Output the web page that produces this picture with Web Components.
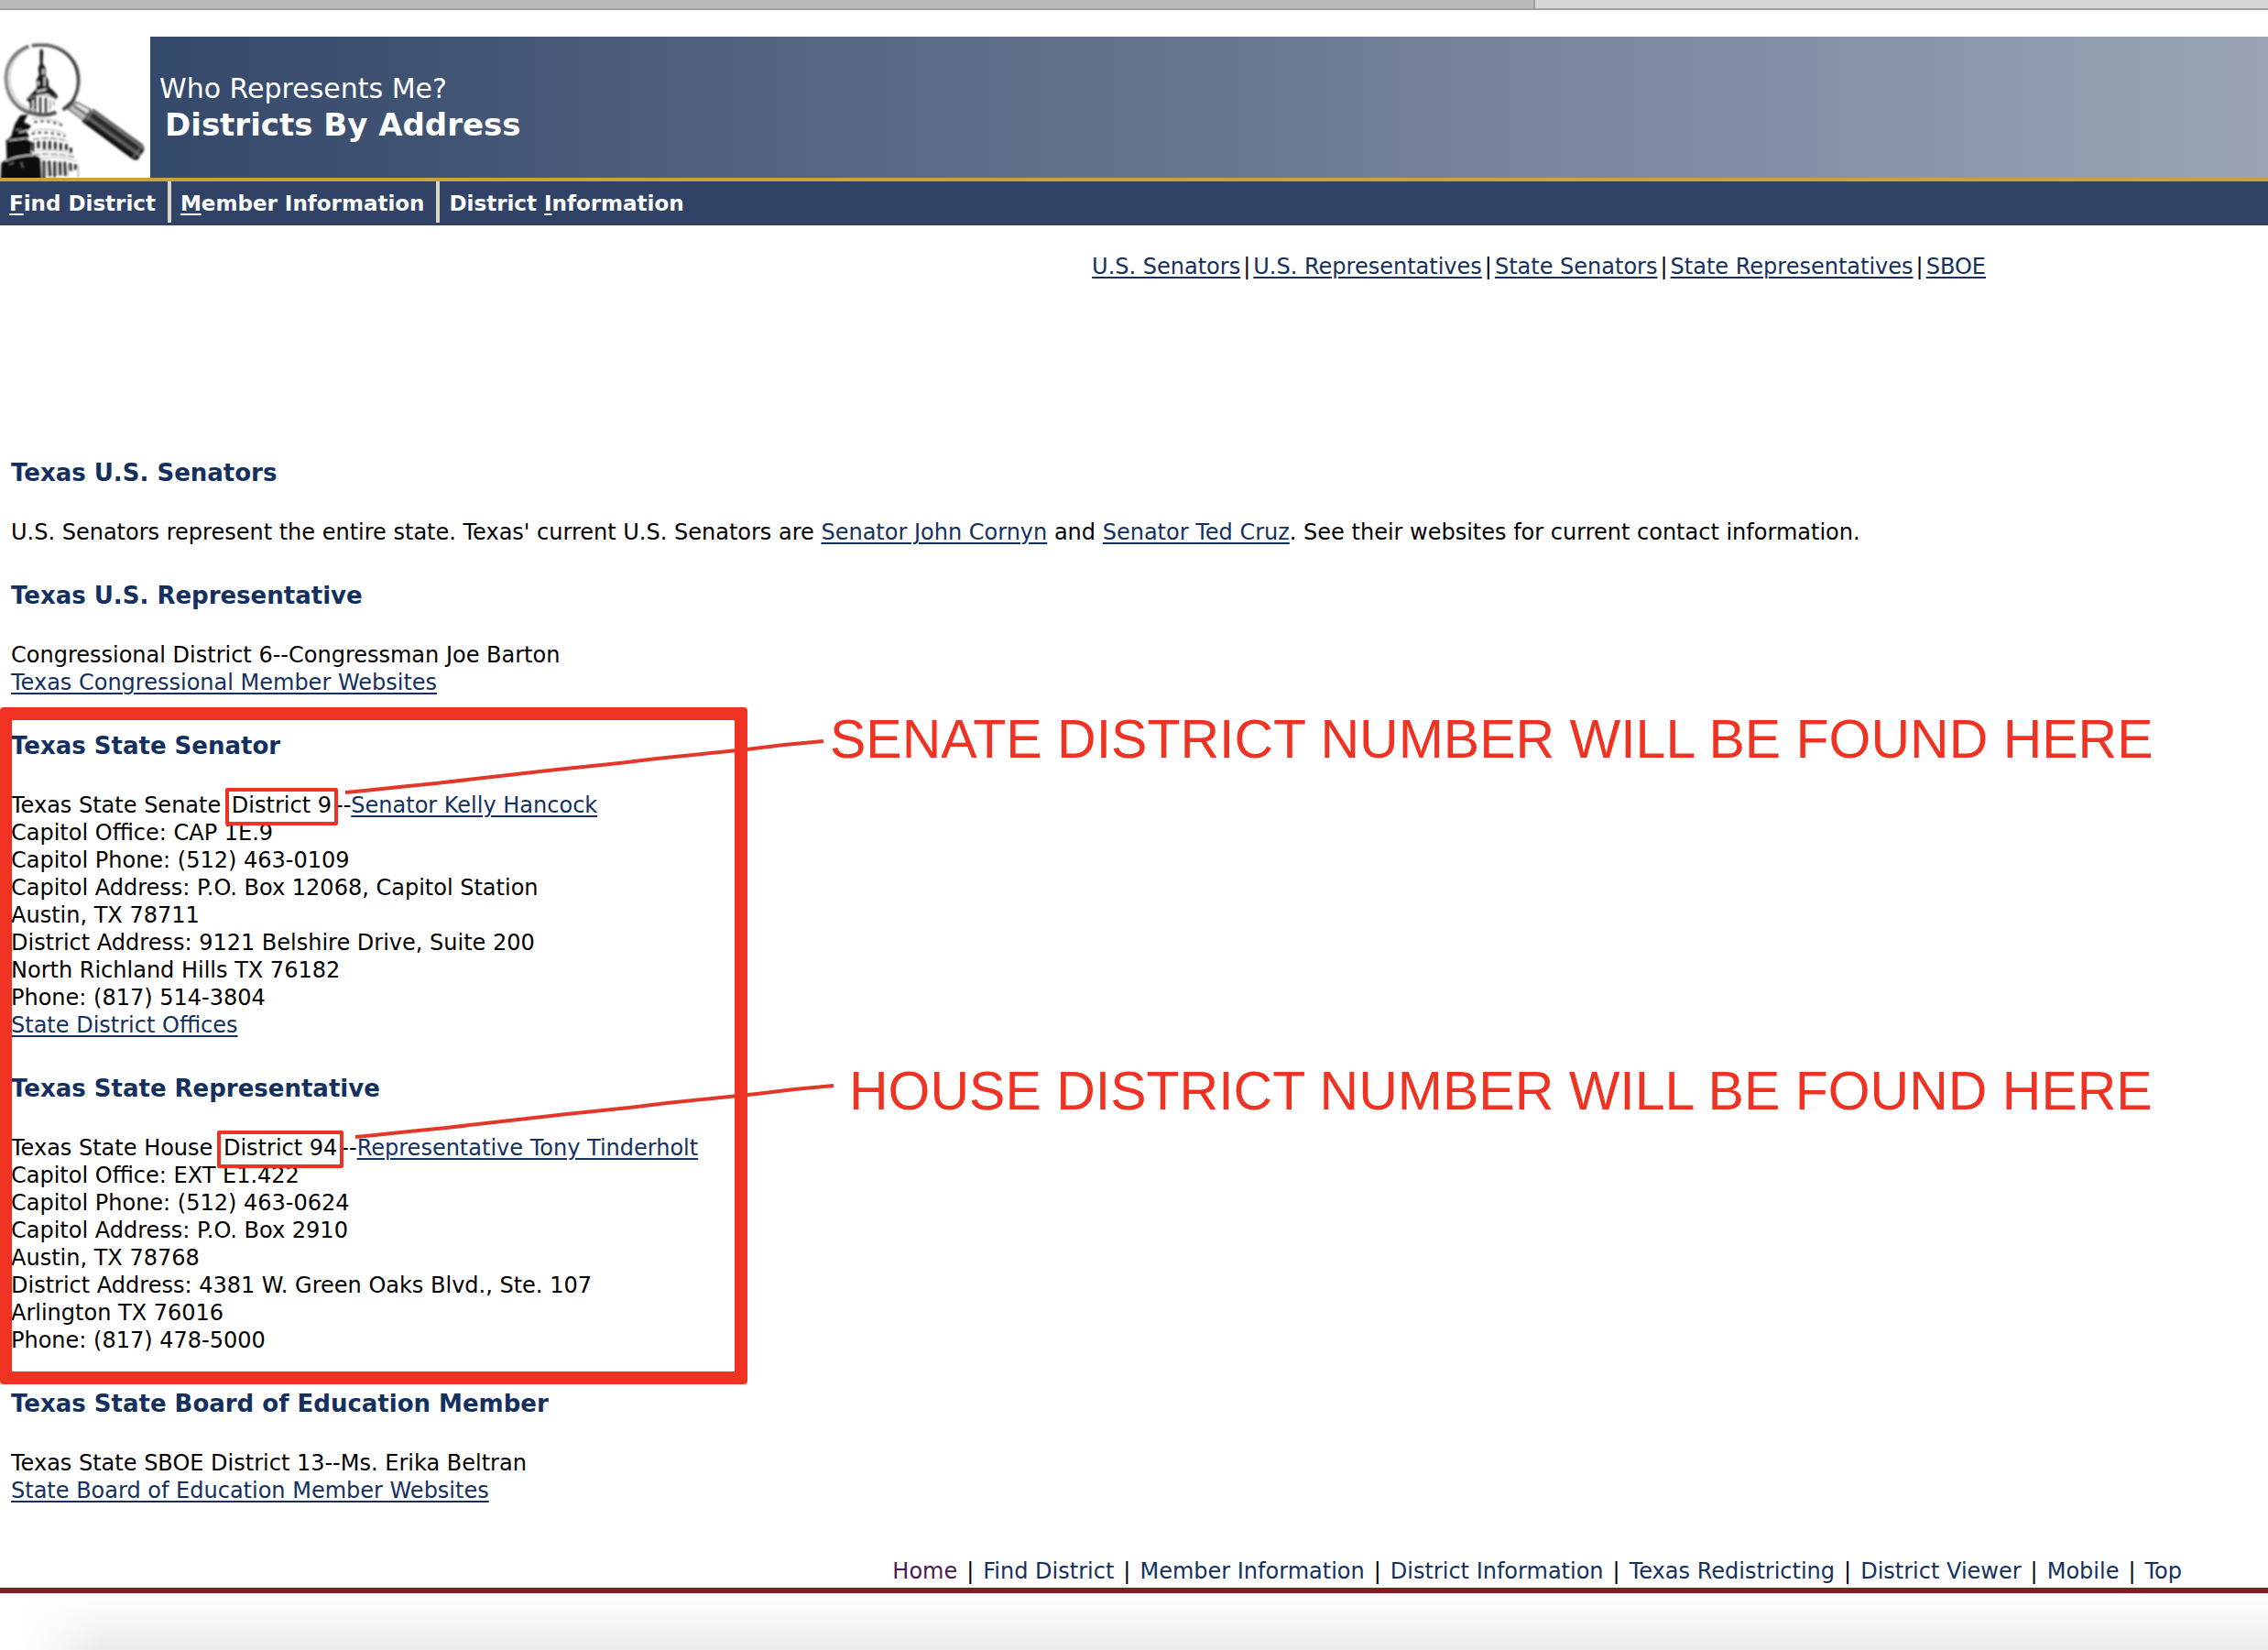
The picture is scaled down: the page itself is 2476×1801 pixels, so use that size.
<!DOCTYPE html>
<html lang="en">
<head>
<meta charset="utf-8">
<title>Who Represents Me? Districts By Address</title>
<style>
    body {
        margin: 0px;
        min-height: 100vh;
        display: flex;
        flex-direction: column;
        background-color: #fff;
        color: #000;
        font-family: 'DejaVu Sans', Verdana, sans-serif;
        font-size: 24px;
        line-height: 30px;
        --navy: #14305e;
        --red: #f03223;
    }

    main {
        padding: 0px 12px;
    }

    a {
        color: var(--navy);
        text-decoration-thickness: 2px;
        text-underline-offset: 3px;
    }

    menu-bar a {
        color: inherit;
        text-decoration: none;
    }

    footer-links a {
        text-decoration: none;
    }

    footer-links a.visited {
        color: #4b1a50;
    }
</style>
</head>
<body>
    <tab-strip></tab-strip>
    <page-banner>
        <span slot="site">Who Represents Me?</span>
        <span slot="page">Districts By Address</span>
    </page-banner>
    <menu-bar>
        <a href="#find"><u>F</u>ind District</a>
        <a href="#member"><u>M</u>ember Information</a>
        <a href="#district">District <u>I</u>nformation</a>
    </menu-bar>
    <jump-links>
        <a href="#us-senators">U.S. Senators</a>
        <span>|</span>
        <a href="#us-rep">U.S. Representatives</a>
        <span>|</span>
        <a href="#senator">State Senators</a>
        <span>|</span>
        <a href="#rep">State Representatives</a>
        <span>|</span>
        <a href="#sboe">SBOE</a>
    </jump-links>

    <main>
        <district-section id="us-senators">
            <span slot="title">Texas U.S. Senators</span>
            U.S. Senators represent the entire state. Texas' current U.S. Senators are <a href="#cornyn">Senator John Cornyn</a> and <a href="#cruz">Senator Ted Cruz</a>. See their websites for current contact information.
        </district-section>

        <district-section id="us-rep">
            <span slot="title">Texas U.S. Representative</span>
            Congressional District 6--Congressman Joe Barton<br>
            <a href="#congress">Texas Congressional Member Websites</a>
        </district-section>

        <red-frame>
            <district-section id="senator">
                <span slot="title">Texas State Senator</span>
                Texas State Senate <district-mark>District 9</district-mark>--<a href="#hancock">Senator Kelly Hancock</a><br>
                Capitol Office: CAP 1E.9<br>
                Capitol Phone: (512) 463-0109<br>
                Capitol Address: P.O. Box 12068, Capitol Station<br>
                Austin, TX 78711<br>
                District Address: 9121 Belshire Drive, Suite 200<br>
                North Richland Hills TX 76182<br>
                Phone: (817) 514-3804<br>
                <a href="#offices">State District Offices</a>
                <call-out slot="note" class="senate">SENATE DISTRICT NUMBER WILL BE FOUND HERE</call-out>
            </district-section>

            <district-section id="rep">
                <span slot="title">Texas State Representative</span>
                Texas State House <district-mark>District 94</district-mark>--<a href="#tinderholt">Representative Tony Tinderholt</a><br>
                Capitol Office: EXT E1.422<br>
                Capitol Phone: (512) 463-0624<br>
                Capitol Address: P.O. Box 2910<br>
                Austin, TX 78768<br>
                District Address: 4381 W. Green Oaks Blvd., Ste. 107<br>
                Arlington TX 76016<br>
                Phone: (817) 478-5000
                <call-out slot="note" class="house">HOUSE DISTRICT NUMBER WILL BE FOUND HERE</call-out>
            </district-section>
        </red-frame>

        <district-section id="sboe">
            <span slot="title">Texas State Board of Education Member</span>
            Texas State SBOE District 13--Ms. Erika Beltran<br>
            <a href="#sboe-sites">State Board of Education Member Websites</a>
        </district-section>
    </main>

    <footer-links>
        <a class="visited" href="#home">Home</a>
        <span>|</span>
        <a href="#find">Find District</a>
        <span>|</span>
        <a href="#member">Member Information</a>
        <span>|</span>
        <a href="#district">District Information</a>
        <span>|</span>
        <a href="#redistricting">Texas Redistricting</a>
        <span>|</span>
        <a href="#viewer">District Viewer</a>
        <span>|</span>
        <a href="#mobile">Mobile</a>
        <span>|</span>
        <a href="#top">Top</a>
    </footer-links>

<script>
class TabStrip extends HTMLElement {
    constructor() {
        super();
        this.attachShadow({ mode: 'open' });
        this.shadowRoot.innerHTML = `
        <style>
            :host {
                display: flex;
                height: 9px;
                border-bottom: 2px solid #a09fa1;
                background-color: #d6d6d7;
            }

            #back {
                flex: 0 0 1674px;
                background-color: #bababb;
                border-right: 2px solid #a09fa1;
            }
        </style>
        <div id="back"></div>
        `
    }
}

class CapitolLogo extends HTMLElement {
    constructor() {
        super();
        this.attachShadow({ mode: 'open' });
        this.shadowRoot.innerHTML = `
        <style>
            :host {
                display: block;
            }

            svg {
                display: block;
                width: 164px;
                height: 154px;
            }
        </style>
        <svg viewBox="0 120 492 462" aria-hidden="true">
            <defs>
                <filter id="soft"><feGaussianBlur stdDeviation="3"/></filter>
                <linearGradient id="rim" gradientUnits="userSpaceOnUse" x1="14" y1="0" x2="264" y2="0">
                    <stop offset="0" stop-color="#8c8c8c"/>
                    <stop offset="0.45" stop-color="#555"/>
                    <stop offset="1" stop-color="#333"/>
                </linearGradient>
                <linearGradient id="grip" gradientUnits="userSpaceOnUse" x1="395" y1="400" x2="355" y2="455">
                    <stop offset="0" stop-color="#111"/>
                    <stop offset="0.25" stop-color="#222"/>
                    <stop offset="0.36" stop-color="#888"/>
                    <stop offset="0.46" stop-color="#222"/>
                    <stop offset="0.65" stop-color="#333"/>
                    <stop offset="0.75" stop-color="#777"/>
                    <stop offset="0.85" stop-color="#222"/>
                    <stop offset="1" stop-color="#111"/>
                </linearGradient>
            </defs>
            <g filter="url(#soft)">
                <!-- drum and dome below the lens -->
                <path fill="#0a0a0a" d="M2 588 L4 535 L22 520 L20 460 L36 448 L48 408 L66 378 L92 374 L78 400 L102 412 L88 434 L96 446 L90 458 L104 466 L100 500 L132 518 L136 588Z"/>
                <path fill="none" stroke="#ddd" stroke-width="4" d="M28 460 L94 452 M62 434 L94 426 M18 528 Q60 506 124 508"/>
                <path fill="none" stroke="#999" stroke-width="3" d="M50 426 L70 422 M30 538 L46 532 M70 532 L74 548"/>
                <path fill="none" stroke="#aaa" stroke-width="3" d="M104 388 Q150 380 202 404 M104 428 Q160 416 214 436 M104 498 Q170 482 238 502 M130 520 Q190 508 252 528"/>
                <path fill="none" stroke="#333" stroke-width="6" stroke-dasharray="10 11" d="M112 400 Q152 390 208 412 M104 438 Q160 428 214 446"/>
                <path fill="none" stroke="#777" stroke-width="4" stroke-dasharray="22 6" d="M108 456 Q170 446 222 462 M110 508 Q170 498 244 514"/>
                <path fill="none" stroke="#111" stroke-width="8" d="M108 466V496 M126 462V486 M145 462V490 M163 462V490 M181 464V490 M199 468V492 M217 472V492 M232 484V500"/>
                <path fill="none" stroke="#111" stroke-width="8" d="M144 526V588 M161 526L164 578 M179 528V580 M196 530L198 574 M212 530L214 576 M230 534L232 560 M247 538V556"/>
                <path fill="none" stroke="#888" stroke-width="3" d="M153 530V578 M188 530V578 M222 536V576 M256 540V582"/>
                <!-- lantern and spire seen through the lens -->
                <path fill="#1c1c1c" d="M135 158 L142 168 L140 208 L149 222 L149 246 L158 262 L160 284 L176 298 L190 316 L182 326 L158 306 L124 308 L98 336 L86 326 L108 302 L121 288 L119 262 L128 246 L125 224 L131 208 L130 168Z"/>
                <path fill="none" stroke="#eee" stroke-width="5" d="M141 226V244 M146 252V282 M126 266V280 M120 300 L152 292"/>
                <path fill="none" stroke="#222" stroke-width="7" d="M101 320V366 M115 316V374 M132 318V374 M150 320V368"/>
                <path fill="none" stroke="#888" stroke-width="4" d="M94 322 Q136 300 182 322 M164 326V360 M176 330V346 M106 342H122"/>
                <!-- lens rim -->
                <path fill="none" stroke="url(#rim)" stroke-width="12" d="M94 152 C40 170 16 222 20 264 C24 324 62 368 122 374 C150 378 168 375 184 368"/>
                <path fill="none" stroke="#bbb" stroke-width="4" d="M88 160 C48 182 30 222 32 260 C36 316 68 356 124 364"/>
                <path fill="none" stroke="url(#rim)" stroke-width="11" d="M104 150 C170 136 226 166 248 216 C264 260 258 300 236 334 L206 360"/>
                <path fill="none" stroke="#aaa" stroke-width="3" d="M106 144 C176 134 240 168 258 226 C266 258 262 296 248 322"/>
                <!-- ferrule and handle -->
                <path fill="#c0c0c0" stroke="#444" stroke-width="4" d="M250 334 L298 360 L274 394 L222 356Z"/>
                <path fill="none" stroke="#333" stroke-width="5" d="M243 348 L284 376"/>
                <path fill="none" stroke="#fff" stroke-width="5" d="M252 343 L288 364"/>
                <path fill="url(#grip)" d="M306 356 L466 472 Q478 486 470 496 L452 522 Q444 528 430 518 L268 398Z"/>
                <path fill="none" stroke="#999" stroke-width="3" d="M460 484 L436 516 M304 364 L280 398"/>
            </g>
        </svg>
        `
    }
}

class PageBanner extends HTMLElement {
    constructor() {
        super();
        this.attachShadow({ mode: 'open' });
        this.shadowRoot.innerHTML = `
        <style>
            :host {
                display: flex;
                margin-top: 29px;
                border-bottom: 4px solid #c9a238;
            }

            #titles {
                flex: 1;
                display: flex;
                flex-direction: column;
                justify-content: center;
                padding-left: 10px;
                color: #fff;
                background-image: linear-gradient(to right, #35496b, #3f5272 12%, #4e5e7d 24%, #5c6b85 37%, #68758f 50%, #75829a 61%, #828fa6 77%, #8f9bae 90%, #9aa4b5);
            }

            #site {
                font-size: 30px;
                line-height: 38px;
            }

            #page {
                margin: 0px;
                padding-left: 6px;
                font-size: 34px;
                line-height: 40px;
            }
        </style>
        <capitol-logo></capitol-logo>
        <div id="titles">
            <div id="site"><slot name="site"></slot></div>
            <h1 id="page"><slot name="page"></slot></h1>
        </div>
        `
    }
}

class MenuBar extends HTMLElement {
    constructor() {
        super();
        this.attachShadow({ mode: 'open' });
        this.shadowRoot.innerHTML = `
        <style>
            :host {
                display: block;
                color: #fff;
                background-color: #304265;
                padding-bottom: 3px;
                font-size: 23px;
                font-weight: bold;
            }

            nav {
                display: flex;
            }

            ::slotted(a) {
                padding: 9px 13px 6px 10px;
                border-right: 4px solid #d9d5c3;
            }

            ::slotted(a:last-child) {
                border-right: none;
            }
        </style>
        <nav><slot></slot></nav>
        `
    }
}

class JumpLinks extends HTMLElement {
    constructor() {
        super();
        this.attachShadow({ mode: 'open' });
        this.shadowRoot.innerHTML = `
        <style>
            :host {
                display: block;
                padding: 30px 308px 195px 0px;
            }

            nav {
                display: flex;
                justify-content: flex-end;
                gap: 3px;
            }
        </style>
        <nav><slot></slot></nav>
        `
    }
}

class DistrictSection extends HTMLElement {
    constructor() {
        super();
        this.attachShadow({ mode: 'open' });
        this.shadowRoot.innerHTML = `
        <style>
            :host {
                display: block;
                position: relative;
                margin-bottom: 39px;
            }

            h2 {
                margin: 0px 0px 35px;
                color: var(--navy);
                font-size: 26px;
                line-height: 30px;
            }
        </style>
        <h2><slot name="title"></slot></h2>
        <div><slot></slot></div>
        <slot name="note"></slot>
        `
    }
}

class RedFrame extends HTMLElement {
    constructor() {
        super();
        this.attachShadow({ mode: 'open' });
        this.shadowRoot.innerHTML = `
        <style>
            :host {
                display: block;
                position: relative;
            }

            /* lies over the text, from the window's edge */
            #frame {
                position: absolute;
                left: -12px;
                top: -27px;
                bottom: -33px;
                width: 816px;
                box-sizing: border-box;
                border: 14px solid var(--red);
                border-left-width: 13px;
                border-radius: 4px;
                pointer-events: none;
            }
        </style>
        <slot></slot>
        <div id="frame"></div>
        `
    }
}

class DistrictMark extends HTMLElement {
    constructor() {
        super();
        this.attachShadow({ mode: 'open' });
        // no white space after the box, it would show up in the line of text
        this.shadowRoot.innerHTML = `
        <style>
            :host {
                display: inline;
                position: relative;
                margin: 0px 4px;
            }

            #box {
                position: absolute;
                inset: -5px -7px -8px;
                border: 4px solid var(--red);
                border-radius: 2px;
                pointer-events: none;
            }
        </style><slot></slot><span id="box"></span>`
    }
}

class CallOut extends HTMLElement {
    constructor() {
        super();
        this.attachShadow({ mode: 'open' });
        this.shadowRoot.innerHTML = `
        <style>
            :host {
                display: flex;
                gap: 6px;
                position: absolute;
                left: 364px;
                top: -28px;
                color: var(--red);
                font-family: 'Liberation Sans', Arial, sans-serif;
                font-size: 59px;
                line-height: 72px;
                white-space: nowrap;
            }

            :host(.house) {
                gap: 16px;
                left: 375px;
                top: -18px;
            }

            svg {
                width: 524px;
                height: 96px;
                margin-bottom: -24px;
            }

            :host(.house) svg {
                margin-top: -8px;
            }
        </style>
        <svg viewBox="0 0 524 96" fill="none" stroke="#e2382a" stroke-width="4" aria-hidden="true">
            <path d="M1 94 L22 92 L60 88 L100 84 L170 76 L232 69 L300 62 L341 57 L390 52 L439 47 L480 42 L523 38"/>
        </svg>
        <span><slot></slot></span>
        `
    }
}

class FooterLinks extends HTMLElement {
    constructor() {
        super();
        this.attachShadow({ mode: 'open' });
        this.shadowRoot.innerHTML = `
        <style>
            :host {
                flex: 1;
                display: flex;
                flex-direction: column;
                margin-top: 19px;
            }

            nav {
                display: flex;
                justify-content: flex-end;
                gap: 10px;
                padding: 0px 94px 3px 0px;
                border-bottom: 6px solid #7c211d;
            }

            #shade {
                flex: 1;
                background-image: linear-gradient(to right, #fff 20px, transparent 110px), linear-gradient(#fff, #ececec);
            }
        </style>
        <nav><slot></slot></nav>
        <div id="shade"></div>
        `
    }
}

customElements.define('tab-strip', TabStrip);
customElements.define('capitol-logo', CapitolLogo);
customElements.define('page-banner', PageBanner);
customElements.define('menu-bar', MenuBar);
customElements.define('jump-links', JumpLinks);
customElements.define('district-section', DistrictSection);
customElements.define('red-frame', RedFrame);
customElements.define('district-mark', DistrictMark);
customElements.define('call-out', CallOut);
customElements.define('footer-links', FooterLinks);
</script>
</body>
</html>
